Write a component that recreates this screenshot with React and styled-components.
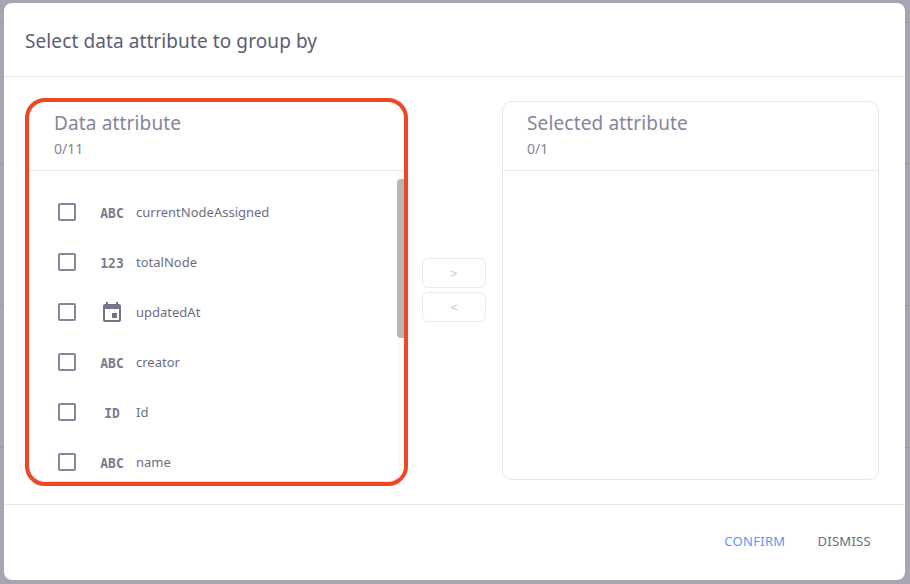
import React from "react";
import styled, { createGlobalStyle } from "styled-components";

const Global = createGlobalStyle`
  html, body { margin: 0; padding: 0; width: 910px; height: 584px; overflow: hidden; background: #a6a6b3; }
  * { box-sizing: border-box; }
`;
const Backdrop = styled.div`
  width: 910px; height: 584px; padding: 3px 5px 4px 4px;
  background-color: #a6a6b3;
  background-image: linear-gradient(#9b9ba8, #9b9ba8), linear-gradient(#9b9ba8, #9b9ba8),
    linear-gradient(#9b9ba8, #9b9ba8), linear-gradient(#9b9ba8, #9b9ba8);
  background-size: 100% 1px;
  background-repeat: no-repeat;
  background-position: 0 22px, 0 163px, 0 305px, 0 447px;
  font-family: "Noto Sans", sans-serif; color: #6d6e80;
`;
const Dialog = styled.div`
  height: 577px; background: #fff; border-radius: 8px; display: flex; flex-direction: column;
`;
const DialogHeader = styled.div`
  height: 74px; padding: 2px 21px 0; display: flex; align-items: center;
  border-bottom: 1px solid #e9e9ed; font-size: 19px; letter-spacing: 0.1px; color: #5c5e72;
`;
const Body = styled.div`
  height: 427px; padding: 24px 26px 24px 21px; display: flex; align-items: stretch;
`;
const HighlightPanel = styled.div`
  width: 383px; height: 388px; margin-top: -3px; border: 4px solid #ef4626; border-radius: 20px;
  overflow: hidden; display: flex; flex-direction: column; box-shadow: inset 0 -1px 0 #e4e4e8;
`;
const PlainPanel = styled.div`
  flex: 1; height: 379px; border: 1px solid #e9e9ed; border-radius: 10px; display: flex; flex-direction: column;
`;
const PanelHeader = styled.div`
  flex: none; border-bottom: 1px solid #e9e9ed; display: flex; flex-direction: column;
  padding-left: ${(p) => p.$inset}px; padding-top: ${(p) => p.$top}px; height: ${(p) => p.$h}px;
`;
const PanelTitle = styled.div`
  font-size: 19px; letter-spacing: 0.15px; line-height: 24px; color: #85869a;
`;
const Count = styled.div`
  font-size: 14px; line-height: 16px; margin-top: 6px; color: #85869a;
`;
const ListArea = styled.div`
  flex: 1; min-height: 0; position: relative; overflow: hidden; padding-top: 16px;
`;
const Row = styled.div`
  height: 50px; display: flex; align-items: center; padding-left: 29px;
`;
const Box = styled.span`
  width: 18px; height: 18px; border: 2px solid #85869a; border-radius: 2px; flex: none;
`;
const TypeSlot = styled.span`
  width: 24px; height: 24px; margin-left: 24px; margin-right: 12px; flex: none;
  display: flex; align-items: center; justify-content: center;
`;
const TypeCode = styled.span`
  display: inline-block; transform: scaleY(1.14);
  font-family: "DejaVu Sans Mono", monospace; font-weight: 700; font-size: 13px;
  color: #7b7c90;
`;
const Name = styled.span`
  font-size: 13px; color: #6d6e80;
`;
const Track = styled.div`
  position: absolute; right: 0; top: 0; bottom: 0; width: 7px; background: #fafafa;
`;
const Thumb = styled.div`
  position: absolute; right: 0; top: 8px; width: 7px; height: 159px; background: #b6b6b6; border-radius: 4px 0 0 4px;
`;
const Transfer = styled.div`
  width: 94px; flex: none; display: flex; flex-direction: column; align-items: center;
  padding: 157px 2px 0 0; gap: 4px;
`;
const MoveBtn = styled.button`
  width: 64px; height: 30px; padding: 0; background: #fff; border: 1px solid #ebebef; border-radius: 6px;
  color: #c6c6cf; font-family: inherit; font-size: 13px;
`;
const Footer = styled.div`
  flex: 1; border-top: 1px solid #e9e9ed; display: flex; justify-content: flex-end; align-items: center;
  gap: 32px; padding: 0 34px 3px 0;
`;
const TextBtn = styled.button`
  padding: 0; border: 0; background: none; font-family: inherit; font-size: 13px; letter-spacing: 0.3px;
  color: ${(p) => (p.$primary ? "#5f97f8" : "#666d85")};
`;
const Calendar = () => (
  <svg width="24" height="24" viewBox="0 0 24 24" fill="#73748a">
    <path d="M19 4h-1V2h-2v2H8V2H6v2H5c-1.100 0-2 .9-2 2v14c0 1.100.9 2 2 2h14c1.100 0 2-.9 2-2V6c0-1.100-.9-2-2-2zm0 16H5V9h14v11zm-7-7h5v5h-5z" />
  </svg>
);
const rows = [
  ["ABC", "currentNodeAssigned"],
  ["123", "totalNode"],
  [null, "updatedAt"],
  ["ABC", "creator"],
  ["ID", "Id"],
  ["ABC", "name"],
];
export default function App() {
  return (
    <Backdrop>
      <Global />
      <Dialog>
        <DialogHeader>Select data attribute to group by</DialogHeader>
        <Body>
          <HighlightPanel>
            <PanelHeader $inset={25} $top={9} $h={69}>
              <PanelTitle>Data attribute</PanelTitle>
              <Count>0/11</Count>
            </PanelHeader>
            <ListArea>
              <Track />
              <Thumb />
              {rows.map(([code, name]) => (
                <Row key={name}>
                  <Box />
                  <TypeSlot>{code ? <TypeCode>{code}</TypeCode> : <Calendar />}</TypeSlot>
                  <Name>{name}</Name>
                </Row>
              ))}
            </ListArea>
          </HighlightPanel>
          <Transfer>
            <MoveBtn>&gt;</MoveBtn>
            <MoveBtn>&lt;</MoveBtn>
          </Transfer>
          <PlainPanel>
            <PanelHeader $inset={24} $top={9} $h={69}>
              <PanelTitle>Selected attribute</PanelTitle>
              <Count>0/1</Count>
            </PanelHeader>
          </PlainPanel>
        </Body>
        <Footer>
          <TextBtn $primary>CONFIRM</TextBtn>
          <TextBtn>DISMISS</TextBtn>
        </Footer>
      </Dialog>
    </Backdrop>
  );
}
